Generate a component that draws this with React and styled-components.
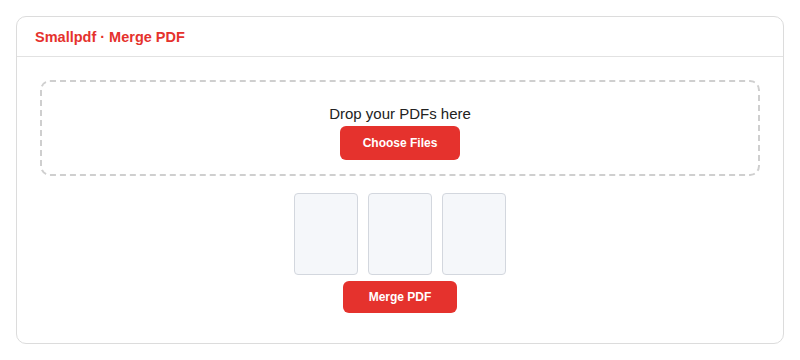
import React from 'react';
import styled, { createGlobalStyle } from 'styled-components';

const GlobalStyle = createGlobalStyle`
  body {
    margin: 0;
    padding: 16px;
    background: #fff;
    font-family: 'Liberation Sans', Arial, sans-serif;
  }
`;

const Card = styled.div`
  display: flex;
  flex-direction: column;
  width: 768px;
  height: 328px;
  box-sizing: border-box;
  border: 1px solid #dcdcdc;
  border-radius: 10px;
  background: #fff;
`;

const Header = styled.div`
  display: flex;
  align-items: center;
  height: 40px;
  box-sizing: border-box;
  padding: 0 18px;
  border-bottom: 1px solid #e2e2e2;
`;

const Title = styled.h1`
  margin: 0;
  font-size: 14.5px;
  font-weight: 700;
  color: #e5322d;
`;

const Body = styled.div`
  display: flex;
  flex-direction: column;
  align-items: center;
  padding: 23px 23px 0;
`;

const DropZone = styled.div`
  display: flex;
  flex-direction: column;
  align-items: center;
  gap: 3px;
  align-self: stretch;
  height: 96px;
  box-sizing: border-box;
  padding: 23px 16px 12px;
  border: 2px dashed #cfcfcf;
  border-radius: 10px;
`;

const DropText = styled.div`
  font-size: 15px;
  line-height: 18px;
  color: #222;
`;

const Button = styled.button`
  width: ${p => p.$width}px;
  height: ${p => p.$height}px;
  border: none;
  border-radius: 6px;
  background: #e5322d;
  color: #fff;
  font-family: inherit;
  font-size: 12px;
  font-weight: 700;
  cursor: pointer;
`;

const Thumbs = styled.div`
  display: flex;
  gap: 10px;
  margin: 17px 0 6px;
`;

const Thumb = styled.div`
  width: 64px;
  height: 82px;
  box-sizing: border-box;
  border: 1px solid #d3d7de;
  border-radius: 4px;
  background: #f5f7fa;
`;

export default function App() {
  return (
    <>
      <GlobalStyle />
      <Card>
        <Header>
          <Title>Smallpdf · Merge PDF</Title>
        </Header>
        <Body>
          <DropZone>
            <DropText>Drop your PDFs here</DropText>
            <Button $width={120} $height={34}>Choose Files</Button>
          </DropZone>
          <Thumbs>
            <Thumb />
            <Thumb />
            <Thumb />
          </Thumbs>
          <Button $width={114} $height={32}>Merge PDF</Button>
        </Body>
      </Card>
    </>
  );
}
